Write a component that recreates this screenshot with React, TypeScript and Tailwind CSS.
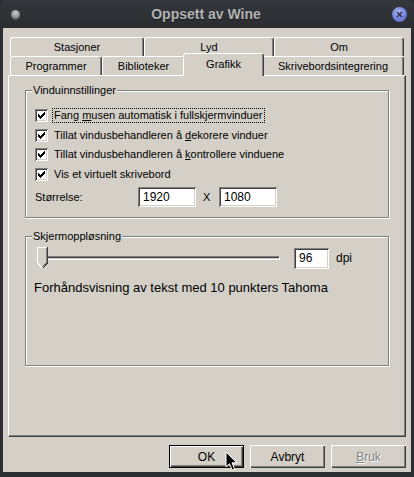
import React from "react";

const raised =
  "shadow-[inset_1px_1px_0_#ffffff,inset_-1px_-1px_0_#404040,inset_-2px_-2px_0_#808080]";
const sunken =
  "shadow-[inset_1px_1px_0_#808080,inset_-1px_-1px_0_#ffffff,inset_2px_2px_0_#404040,inset_-2px_-2px_0_#d4d0c8]";

function CheckMark() {
  const ys = [2, 3, 4, 3, 2, 1, 0];
  return (
    <svg width="7" height="7" viewBox="0 0 7 7" shapeRendering="crispEdges">
      {ys.map((y, i) => (
        <rect key={i} x={i} y={y} width="1" height="3" fill="#000" />
      ))}
    </svg>
  );
}

function Check({ children, focus }: { children: React.ReactNode; focus?: boolean }) {
  return (
    <div className="flex items-center h-[19.5px]">
      <span className={"w-[13px] h-[13px] bg-white flex items-center justify-center shrink-0 " + sunken}>
        <CheckMark />
      </span>
      <span
        className={
          "ml-[5px] px-[1px] leading-[13px] " +
          (focus ? "outline outline-1 outline-dotted outline-black" : "")
        }
      >
        {children}
      </span>
    </div>
  );
}

function Tab({ label, cls }: { label: string; cls: string }) {
  return (
    <div
      className={
        "h-[19px] border-t border-l border-white border-r border-r-[#404040] rounded-t-[3px] flex items-center justify-center shadow-[inset_-1px_0_0_#808080] bg-[#d4d0c8] " +
        cls
      }
    >
      {label}
    </div>
  );
}

function Button({
  children,
  isDefault,
  disabled,
}: {
  children: React.ReactNode;
  isDefault?: boolean;
  disabled?: boolean;
}) {
  return (
    <div
      className={
        "w-[75px] h-[23px] flex items-center justify-center " +
        (isDefault ? "border border-black " : "") +
        (disabled ? "text-[#808080] [text-shadow:1px_1px_0_#ffffff] " : "")
      }
    >
      <div className={"w-full h-full flex items-center justify-center " + raised}>{children}</div>
    </div>
  );
}

function Thumb() {
  return (
    <svg width="11" height="22" viewBox="0 0 11 22" shapeRendering="crispEdges">
      <polygon points="0,0 11,0 11,16 5.5,21.5 0,16" fill="#d4d0c8" />
      <path d="M0.5 16 L0.5 0.5 L10 0.5" stroke="#ffffff" fill="none" />
      <path d="M10.5 0 L10.5 16 L5.5 21.5" stroke="#404040" fill="none" />
      <path d="M9.5 1 L9.5 15.6 L5.5 20" stroke="#808080" fill="none" />
      <path d="M0.5 16 L5 20.5" stroke="#ffffff" fill="none" />
    </svg>
  );
}

export default function App() {
  return (
    <div className="w-[414px] h-[477px] bg-[#2b2d31] overflow-hidden relative font-['Liberation_Sans',Arial,sans-serif] text-[11px] text-black">
      {/* Title bar */}
      <div className="h-[28px] rounded-t-[7px] bg-gradient-to-b from-[#34373c] to-[#2a2c30] flex items-center relative">
        <div className="ml-[11px] w-[9px] h-[9px] rounded-full bg-[radial-gradient(circle_at_50%_35%,#d0d0d0,#8a8a8a_60%,#4a4a4a)] shadow-[0_1px_0_#555]" />
        <div className="flex-1 text-center font-bold text-[14px] text-[#b3b3b3] [text-shadow:0_1px_0_#1a1a1a]">
          Oppsett av Wine
        </div>
        <div className="mr-[7px] w-[15px] h-[15px] rounded-full bg-[radial-gradient(circle_at_45%_35%,#b0bcf2,#6f80d8_55%,#4d5cb8)] flex items-center justify-center">
          <svg width="7" height="7" viewBox="0 0 7 7">
            <path d="M1 1 L6 6 M6 1 L1 6" stroke="#26284a" strokeWidth="1.4" />
          </svg>
        </div>
      </div>

      {/* Body */}
      <div className="mx-[3px] h-[444px] bg-[#d4d0c8]">
        {/* Tabs */}
        <div className="ml-[7px] pt-[9px] w-[394px]">
          <div className="flex">
            <Tab label="Stasjoner" cls="w-[134px]" />
            <Tab label="Lyd" cls="w-[130px]" />
            <Tab label="Om" cls="w-[130px]" />
          </div>
          <div className="flex h-[19px] relative">
            <Tab label="Programmer" cls="w-[92px]" />
            <Tab label="Biblioteker" cls="w-[83px]" />
            <div className="relative z-10 -mt-[3px] -mx-[2px] w-[81px] h-[23px] border-t border-l border-white border-r border-r-[#404040] rounded-t-[3px] flex items-start justify-center pt-[2px] shadow-[inset_-1px_0_0_#808080] bg-[#d4d0c8]">
              Grafikk
            </div>
            <Tab label="Skrivebordsintegrering" cls="w-[142px]" />
          </div>
        </div>

        {/* Panel */}
        <div className="ml-[5px] w-[398px] h-[362px] border-t border-l border-white border-r border-b border-r-[#404040] border-b-[#404040] shadow-[inset_-1px_-1px_0_#808080] pt-[14px] pl-[16px]">
          {/* Group 1 */}
          <div className="relative w-[364px] h-[128px] border border-[#808080] shadow-[1px_1px_0_#ffffff,inset_1px_1px_0_#ffffff] pl-[9px] pt-[15px]">
            <span className="absolute left-[6px] -top-[7px] bg-[#d4d0c8] px-[1px] leading-[13px]">
              Vinduinnstillinger
            </span>
            <Check focus>
              Fang <span className="underline">m</span>usen automatisk i fullskjermvinduer
            </Check>
            <Check>
              Tillat vindusbehandleren å <span className="underline">d</span>ekorere vinduer
            </Check>
            <Check>
              Tillat vindusbehandleren å <span className="underline">k</span>ontrollere vinduene
            </Check>
            <Check>Vis et virtuelt skrivebord</Check>
            <div className="flex items-center mt-[3px]">
              <span className="w-[103px]">Størrelse:</span>
              <div className={"w-[58px] h-[20px] bg-white flex items-center pl-[5px] text-[12px] " + sunken}>1920</div>
              <span className="w-[23px] pl-[7px]">X</span>
              <div className={"w-[58px] h-[20px] bg-white flex items-center pl-[5px] text-[12px] " + sunken}>1080</div>
            </div>
          </div>

          {/* Group 2 */}
          <div className="relative mt-[18px] w-[364px] h-[130px] border border-[#808080] shadow-[1px_1px_0_#ffffff,inset_1px_1px_0_#ffffff] pl-[8px] pt-[10px]">
            <span className="absolute left-[6px] -top-[7px] bg-[#d4d0c8] px-[1px] leading-[13px]">
              Skjermoppløsning
            </span>
            <div className="flex items-center">
              <div className="relative ml-[3px] w-[243px] h-[22px] flex items-center">
                <div className="ml-[3px] w-[240px] h-[4px] border-t border-l border-t-[#808080] border-l-[#808080] border-b border-r border-b-white border-r-white shadow-[inset_1px_1px_0_#404040]" />
                <div className="absolute left-0 top-0">
                  <Thumb />
                </div>
              </div>
              <div className={"ml-[14px] w-[35px] h-[21px] bg-white flex items-center pl-[5px] text-[12px] " + sunken}>96</div>
              <span className="ml-[7px] text-[12px]">dpi</span>
            </div>
            <div className="mt-[11px] text-[13px] leading-[16px]">
              Forhåndsvisning av tekst med 10 punkters Tahoma
            </div>
          </div>
        </div>

        {/* Buttons */}
        <div className="flex justify-end gap-[6px] pr-[5px] mt-[8px] text-[12px]">
          <Button isDefault>OK</Button>
          <Button>Avbryt</Button>
          <Button disabled>
            <span>
              <span className="underline">B</span>ruk
            </span>
          </Button>
        </div>
      </div>

      {/* Mouse cursor */}
      <svg
        className="absolute left-[225px] top-[451px]"
        width="14"
        height="21"
        viewBox="0 0 14 21"
      >
        <path
          d="M1 1 L1 16 L4.5 12.8 L7.2 19 L9.6 18 L7 11.8 L11.8 11.8 Z"
          fill="#000"
          stroke="#ffffff"
          strokeWidth="1"
          strokeLinejoin="round"
        />
      </svg>
    </div>
  );
}
